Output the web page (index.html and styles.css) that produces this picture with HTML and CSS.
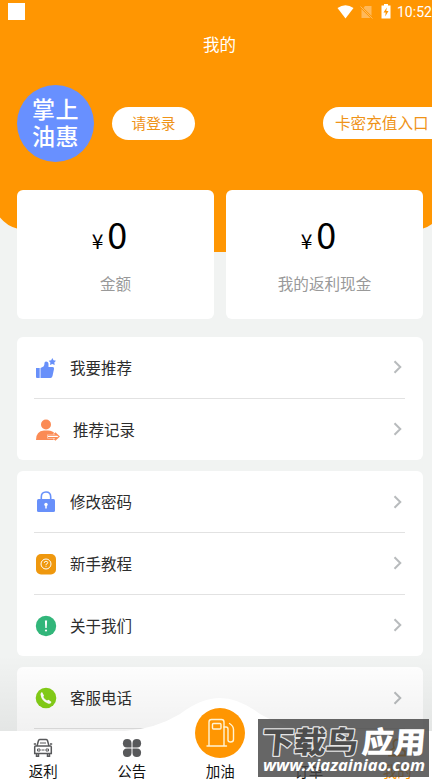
FILE: index.html
```html
<!DOCTYPE html>
<html lang="zh-CN">
<head>
<meta charset="utf-8">
<title>我的</title>
<link rel="stylesheet" href="styles.css">
</head>
<body>
<div class="screen">
  <svg class="backdrop" width="432" height="252" viewBox="0 0 432 252"><path fill="#ff9602" d="M0 0H432V224Q428 227 423 228.500Q390 240 330 252H110Q50 240 17 228.500Q7 226 0 217.500Z"/></svg>

  <header class="statusbar">
    <span class="square"></span>
    <div class="signals">
      <svg class="wifi" width="17" height="14" viewBox="0 0 17 14"><path fill="#fff" d="M.5 3Q8.500-2.600 16.500 3L8.500 13.600Z"/></svg>
      <svg class="sim" width="13" height="14" viewBox="0 0 13 14"><path fill="#ffb95a" d="M5 1H11.500V11L3.500 3ZM1.500 4L10.500 13H1.500Z"/><path d="M.5 1.500L12.500 13.500" stroke="#ffb95a"/></svg>
      <svg class="battery" width="10" height="15" viewBox="0 0 10 15"><path fill="#fff" d="M3 0H7V1.500H9.500V14.500H.5V1.500H3Z"/><path fill="#ff9602" d="M5.800 3.500L2.500 8.500H4.700L4.200 12.500L7.500 7H5.300Z"/></svg>
      <span class="clock">10:52</span>
    </div>
  </header>
  <h1 class="title">我的</h1>

  <section class="profile">
    <div class="avatar"><span>掌上</span><span>油惠</span></div>
    <a class="login">请登录</a>
    <a class="recharge">卡密充值入口</a>
  </section>

  <section class="balances">
    <div class="balance"><div class="amount"><small>¥</small>0</div><div class="label">金额</div></div>
    <div class="balance"><div class="amount"><small>¥</small>0</div><div class="label">我的返利现金</div></div>
  </section>

  <main class="groups">
    <section class="group">
      <div class="row">
        <svg class="icon" width="24" height="24" viewBox="0 0 24 24"><g fill="#6890fa"><path d="M2 12H5.700V22H3Q2 22 2 21Z"/><path d="M6.500 12L9.500 10.500Q10.500 9.500 10.500 7Q10.500 5.500 12 5.500Q14.500 5.500 14.500 8V11H18.500Q20.500 11 20 13L18.500 20Q18 22 16.500 22H6.500Z"/><path d="M18.300 2L19.500 4.300L22 4.700L20.300 6.500L20.700 9L18.300 7.900L16 9L16.400 6.500L14.700 4.700L17.200 4.300Z"/></g></svg>
        <span class="name">我要推荐</span>
        <svg class="arrow" width="9" height="14" viewBox="0 0 9 14"><path d="M1.500 1.200L7.300 7L1.500 12.800"/></svg>
      </div>
      <div class="row">
        <svg class="icon" width="27" height="24" viewBox="0 0 27 24"><g fill="#fb8b55"><circle cx="12" cy="6.500" r="5"/><path d="M2 22Q2 13 10 12.500H14Q19 12.500 21 16V22Z"/></g><path d="M13.500 18.500H25M20.500 14.500L25 18.500L20.500 22.500" fill="none" stroke="#fff" stroke-width="4"/><path d="M14 17.200H22L20.500 15M14 19.600H22L20.500 22M21 14.800L25 18.500L21 22.200" fill="none" stroke="#fb8b55" stroke-width="1.300"/></svg>
        <span class="name">推荐记录</span>
        <svg class="arrow" width="9" height="14" viewBox="0 0 9 14"><path d="M1.500 1.200L7.300 7L1.500 12.800"/></svg>
      </div>
    </section>

    <section class="group">
      <div class="row">
        <svg class="icon" width="24" height="24" viewBox="0 0 24 24"><path d="M7.300 10V7Q7.300 2 12 2Q16.700 2 16.700 7V10" fill="none" stroke="#6890fa" stroke-width="1.600"/><rect x="3" y="9" width="18" height="13" rx="1.500" fill="#6890fa"/><circle cx="12" cy="14.500" r="1.700" fill="#fff"/><path d="M12 15V18.500" stroke="#fff" stroke-width="1.500"/></svg>
        <span class="name">修改密码</span>
        <svg class="arrow" width="9" height="14" viewBox="0 0 9 14"><path d="M1.500 1.200L7.300 7L1.500 12.800"/></svg>
      </div>
      <div class="row">
        <svg class="icon" width="24" height="24" viewBox="0 0 24 24"><rect x="2" y="2" width="20" height="20.500" rx="5" fill="#ef980e"/><circle cx="12" cy="12" r="5" fill="none" stroke="#fff" stroke-width="1"/><path d="M10.200 11Q10.200 9.300 12 9.300Q13.800 9.300 13.800 10.800Q13.800 11.700 12 12.300V13.300M12 14.200V15" fill="none" stroke="#fff" stroke-width=".9"/></svg>
        <span class="name">新手教程</span>
        <svg class="arrow" width="9" height="14" viewBox="0 0 9 14"><path d="M1.500 1.200L7.300 7L1.500 12.800"/></svg>
      </div>
      <div class="row">
        <svg class="icon" width="24" height="24" viewBox="0 0 24 24"><circle cx="12" cy="12" r="10.200" fill="#32b67a"/><path d="M10.900 6.500H13.100L12.700 14H11.300Z" fill="#fff"/><circle cx="12" cy="16.500" r="1.100" fill="#fff"/></svg>
        <span class="name">关于我们</span>
        <svg class="arrow" width="9" height="14" viewBox="0 0 9 14"><path d="M1.500 1.200L7.300 7L1.500 12.800"/></svg>
      </div>
    </section>

    <section class="group">
      <div class="row">
        <svg class="icon" width="24" height="24" viewBox="0 0 24 24"><circle cx="12" cy="12" r="10.300" fill="#84cf18"/><path d="M8 6L10 9.500L9.300 11Q10.800 13.800 13 14.500L14.500 13.800L17.500 16Q16.500 18.200 14.500 17.800Q7.500 15.500 6.500 8.500Q6.500 6.700 8 6Z" fill="#fff"/></svg>
        <span class="name">客服电话</span>
        <svg class="arrow" width="9" height="14" viewBox="0 0 9 14"><path d="M1.500 1.200L7.300 7L1.500 12.800"/></svg>
      </div>
      <div class="row"></div>
    </section>
  </main>

  <nav class="tabbar">
    <svg class="tabshape" width="432" height="83" viewBox="0 0 432 83"><path fill="#fff" d="M0 34H125Q155 32 180 17Q201 1 220 1Q239 1 260 17Q285 32 315 34H432V83H0Z"/></svg>
    <div class="tabs">
      <a class="tab"><svg width="20" height="20" viewBox="0 0 20 20"><g fill="none" stroke="#58595b" stroke-width="1.500"><path d="M4 8L5.500 2.500Q6 1.500 7 1.500H13Q14 1.500 14.500 2.500L16 8M2.500 8H17.500Q18.300 8 18.300 9V15.500H1.700V9Q1.700 8 2.500 8ZM3.500 16V18.300H5.500V16M14.500 16V18.300H16.500V16M.8 6H3M17 6H19.200"/><path stroke-width="1" d="M4.500 11H7V13H4.500ZM8.500 12H11.500M13 11H15.500V13H13ZM7 5H13"/></g></svg><span>返利</span></a>
      <a class="tab"><svg width="20" height="20" viewBox="0 0 20 20"><g fill="#58595b"><path d="M9.500 9.500H5A4.300 4.300 0 1 1 9.500 5Z"/><path d="M10.500 9.500V5A4.300 4.300 0 1 1 15 9.500Z"/><path d="M9.500 10.500V15A4.300 4.300 0 1 1 5 10.500Z"/><path d="M10.500 10.500H15A4.300 4.300 0 1 1 10.500 15Z"/></g></svg><span>公告</span></a>
      <a class="tab fuel"><svg width="50" height="50" viewBox="0 0 50 50"><circle cx="25" cy="25" r="25" fill="#ff9602"/><g fill="none" stroke="#fff4d5" stroke-width="1.400" stroke-linejoin="round" stroke-linecap="round"><path d="M14 37.500V14Q14 11.500 16.500 11.500H26.500Q29 11.500 29 14V37.500M12 38H31.500"/><rect x="17.500" y="15.500" width="8.500" height="5.500" rx="1"/><path d="M29 19H31Q33 19 33 21V32Q33 34 35.500 34Q38.500 34 38.500 31.500V21.500Q38.500 18 34.500 15.500"/></g></svg><span>加油</span></a>
      <a class="tab"><svg width="20" height="20" viewBox="0 0 20 20"><path d="M4 2H16V18H4ZM7 7H13M7 11H13" fill="none" stroke="#58595b" stroke-width="1.500"/></svg><span>订单</span></a>
      <a class="tab active"><svg width="20" height="20" viewBox="0 0 20 20"><path d="M7 10Q4.500 2 10 1.500Q15.500 2 13 10L18 13.500V17.500H2V13.500Z" fill="none" stroke="#ff9602" stroke-width="1.800"/></svg><span>我的</span></a>
    </div>
  </nav>

  <div class="stamp">
    <svg width="171" height="58" viewBox="0 0 171 58">
      <g class="stamp-name" transform="translate(4 0) skewX(-5)"><text class="dark" x="2" y="34" textLength="96" lengthAdjust="spacingAndGlyphs">下载鸟</text><text class="light" x="102" y="34" textLength="64" lengthAdjust="spacingAndGlyphs">应用</text></g>
      <text class="stamp-url" x="5" y="52" textLength="162" lengthAdjust="spacingAndGlyphs">www.xiazainiao.com</text>
    </svg>
  </div>
</div>
</body>
</html>
```
FILE: styles.css
```css
* { box-sizing: border-box; }
body { margin: 0; font-family: "Noto Sans CJK SC", sans-serif; color: #2d2d2d; }
.screen { position: relative; width: 432px; height: 780px; overflow: hidden; background: #f1f3f2; isolation: isolate; }
.backdrop { position: absolute; top: 0; left: 0; z-index: -1; }

.statusbar { height: 24px; display: flex; justify-content: space-between; padding: 3px 0 0 8px; }
.square { width: 17px; height: 17px; background: #fff; }
.signals { display: flex; align-items: flex-start; color: #fff; }
.wifi { margin-top: 2px; }
.sim { margin: 2px 0 0 6px; }
.battery { margin: 1px 0 0 8px; }
.clock { font: 400 14px/19px Roboto, sans-serif; margin-left: 6px; width: 35px; }
.title { margin: 8px 0 0 7px; font-size: 16.500px; line-height: 24px; font-weight: 400; color: #fff; text-align: center; }

.profile { display: flex; align-items: center; height: 78px; margin: 28px 0 0 17px; }
.avatar { width: 77px; height: 77px; border-radius: 50%; background: #6890ff; color: #fff; font-size: 23px; line-height: 27px; font-weight: 500; display: flex; flex-direction: column; align-items: center; justify-content: center; letter-spacing: .5px; padding-bottom: 2px; }
.login, .recharge { height: 33px; line-height: 33px; background: #fff; color: #ef9318; }
.login { width: 83px; margin-left: 18px; border-radius: 17px; font-size: 14.700px; line-height: 32px; text-align: center; }
.recharge { width: 109px; margin-left: auto; padding-left: 12px; border-radius: 17px 0 0 17px; font-size: 15.600px; line-height: 31px; height: 32px; white-space: nowrap; }

.balances { display: grid; grid-template-columns: 197px 197px; gap: 12px; margin: 28px 0 0 17px; }
.balance { height: 129px; border-radius: 6px; background: #fff; text-align: center; padding-top: 18px; }
.amount { height: 50px; line-height: 50px; font-size: 36px; color: #000; margin-right: 12px; }
.amount small { font-size: 21px; margin-right: 4px; }
.label { margin-top: 14px; line-height: 23px; font-size: 15.600px; color: #999; }

.groups { display: flex; flex-direction: column; gap: 11px; margin: 18px 9px 0 17px; }
.group { background: #fff; border-radius: 6px; padding: 0 18px 0 17px; }
.row { height: 61.700px; display: flex; align-items: center; }
.row + .row { box-shadow: 0 -1px #e2e2e2; }
.name { margin-left: 12px; font-size: 15.500px; line-height: 24px; padding-bottom: 2px; }
.arrow { margin: 0 3px 1px auto; fill: none; stroke: #b8bbbd; stroke-width: 2; }

.tabbar { position: absolute; left: 0; bottom: 0; width: 432px; height: 125px; padding-top: 42px; background: linear-gradient(rgba(0,0,0,0), rgba(0,0,0,.09)); }
.tabshape { display: block; }
.tabs { position: absolute; left: 0; bottom: 0; width: 432px; height: 77px; display: grid; grid-template-columns: repeat(5, 88.500px); margin-left: -1px; margin-bottom: -1px; }
.tab { display: flex; flex-direction: column; align-items: center; justify-content: flex-end; font-size: 14.500px; line-height: 20px; color: #111; gap: 3px; }
.tab.active { color: #ff9602; }

.stamp { position: absolute; left: 258px; top: 719px; width: 171px; height: 58px; background: rgba(68,68,68,.82); }
.stamp svg { display: block; }
.stamp-name { font: 900 30px "Noto Sans CJK SC", sans-serif; paint-order: stroke; stroke-linejoin: round; }
.dark { fill: #4d4d4d; stroke: #e4e4e4; stroke-width: 2.500px; }
.light { fill: #fff; }
.stamp-url { font: italic 700 16.500px "Noto Sans", sans-serif; fill: #fff; }
```
